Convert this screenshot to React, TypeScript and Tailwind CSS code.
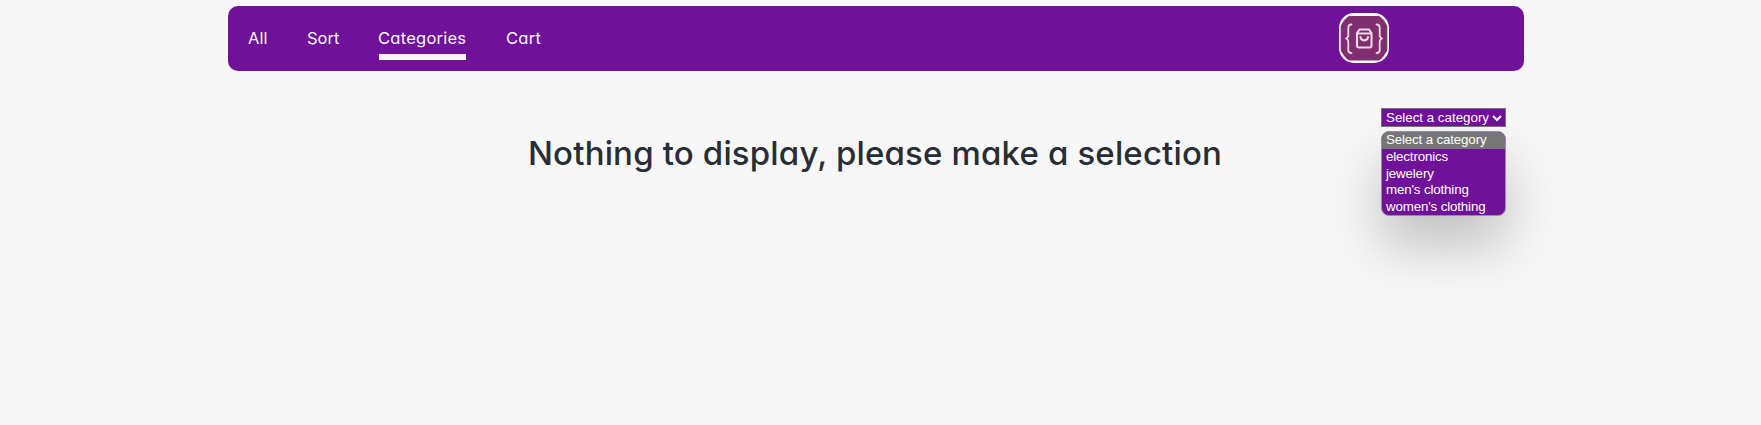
const options = ["electronics", "jewelery", "men's clothing", "women's clothing"];

function Logo() {
  return (
    <svg width="50" height="50" viewBox="0 0 50 50" fill="none">
      <rect width="50" height="50" rx="15" fill="#fff" />
      <path d="M10 3H40Q45 6 48.300 13V37Q45 44.500 40 47.500H10Q5 44.500 1.700 37V13Q5 6 10 3Z" fill="#812e70" />
      <g stroke="#ecd9e6" strokeWidth="1.8" strokeLinecap="round" strokeLinejoin="round">
        <path d="M12.500 11.500c-2.500 0-3.200 1-3.200 3v7.500c0 1.800-.6 3-2.300 3.500 1.700.5 2.300 1.700 2.300 3.500v8c0 2 .7 3 3.200 3" />
        <path d="M37.500 11.500c2.500 0 3.200 1 3.200 3v7.500c0 1.800.6 3 2.300 3.500-1.700.5-2.300 1.700-2.300 3.500v8c0 2-.7 3-3.200 3" />
        <path d="M18 20l2.500-3.500h9.500l2.500 3.500v12.500a2 2 0 0 1-2 2h-10.500a2 2 0 0 1-2-2zM18 20.500h14.500M21.500 24c.5 4.500 7 4.500 7.500 0" strokeWidth="2.100" />
      </g>
    </svg>
  );
}

export default function App() {
  return (
    <div className="h-[425px] overflow-hidden bg-[#f7f7f7] pt-1.5 text-[#f7f7f7]">
      <div className="ml-[228px] w-[1296px]">
        <nav className="flex h-[65px] items-center rounded-[10px] bg-[#6f1299] pr-[135px] pb-0.5 pl-5 font-[Inter,sans-serif] text-[16.5px] leading-6 [font-feature-settings:'cv11']">
          <a className="w-[59px]">All</a>
          <a className="w-[71px]">Sort</a>
          <a className="relative w-[128px] tracking-[0.25px]">
            Categories
            <span className="absolute top-[28px] left-[1px] h-1.5 w-[87px] bg-[#f7f7f7]" />
          </a>
          <a className="tracking-[0.25px]">Cart</a>
          <div className="ml-auto"><Logo /></div>
        </nav>
        <main className="relative">
          <h1 className="pt-[58px] pl-[300px] font-[Inter,sans-serif] text-[33px] leading-[48px] font-[540] tracking-[0.16px] whitespace-nowrap text-[#282d36] [font-feature-settings:'cv11']">
            Nothing to display, please make a selection
          </h1>
          <div className="absolute top-[37px] left-[1153px] w-[125px] font-['Liberation_Sans',Arial,sans-serif] text-[13.333px] text-white">
            <div className="flex h-[19px] items-center border border-[#767676] bg-[#6f1299] pl-1 leading-[17px] whitespace-nowrap">
              Select a category
              <svg className="ml-[3px]" width="10" height="8" viewBox="0 0 10 8" fill="none" stroke="white" strokeWidth="2">
                <path d="M1 2l4 4 4-4" />
              </svg>
            </div>
            <ul className="mt-1 w-[125px] overflow-hidden rounded-[8px] border border-[#9a8aa3] bg-[#6f1299] tracking-[-0.15px] shadow-[0_30px_54px_rgba(0,0,0,0.22)]">
              <li className="h-[17px] bg-[#767676] pl-1 leading-[15px]">Select a category</li>
              {options.map((o) => (
                <li key={o} className="h-[16.5px] pl-1 leading-[15px]">{o}</li>
              ))}
            </ul>
          </div>
        </main>
      </div>
    </div>
  );
}
